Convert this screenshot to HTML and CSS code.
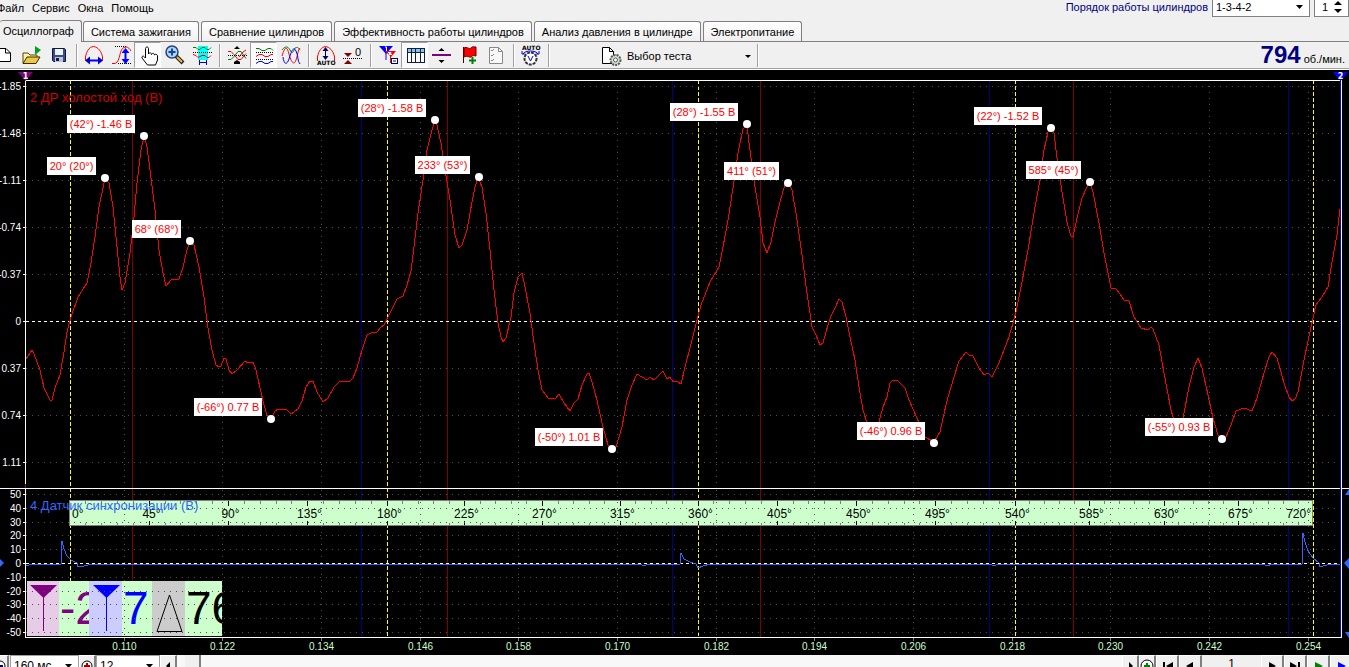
FILE: index.html
```html
<!DOCTYPE html>
<html lang="ru">
<head>
<meta charset="utf-8">
<title>Осциллограф</title>
<link rel="stylesheet" href="styles.css">
</head>
<body>
<header class="top">
  <div class="top-left">
    <nav class="menu">
      <button>Файл</button><button>Сервис</button><button>Окна</button><button>Помощь</button>
    </nav>
    <div class="tabs" role="tablist">
      <button class="tab active" role="tab" aria-selected="true">Осциллограф</button>
      <button class="tab" role="tab">Система зажигания</button>
      <button class="tab" role="tab">Сравнение цилиндров</button>
      <button class="tab" role="tab">Эффективность работы цилиндров</button>
      <button class="tab" role="tab">Анализ давления в цилиндре</button>
      <button class="tab" role="tab">Электропитание</button>
    </div>
  </div>
  <div class="order">
    <label for="order">Порядок работы цилиндров</label>
    <span class="combo order-combo"><select id="order"><option>1-3-4-2</option></select><svg class="caret" viewBox="0 0 7 4"><path d="M0 0h7L3.500 4z"/></svg></span>
    <span class="combo num-combo"><input id="cyl" aria-label="Цилиндр" value="1"><svg class="updown" viewBox="0 0 8 14"><path d="M0 5L4 1l4 4zM0 9h8l-4 4z"/></svg></span>
  </div>
</header>

<div class="toolbar">
  <button class="tool" aria-label="Новый"><svg viewBox="0 0 27 26"><path d="M4 6.500h11l4.500 4.500v8.500H4z" fill="#fff" stroke="#000"/><path d="M14.500 6.500V11h5" fill="none" stroke="#000"/></svg></button>
  <button class="tool" aria-label="Открыть"><svg viewBox="0 0 27 26"><path d="M5 21V11h5l2 2h7v3" fill="#fff3a8" stroke="#554400"/><path d="M5 21.500L9 15h13l-4 6.500z" fill="#f0c840" stroke="#332b00"/><path d="M17 4v9l6-5z" fill="#00a020"/></svg></button>
  <button class="tool" aria-label="Сохранить"><svg viewBox="0 0 27 26"><path d="M7.500 6.500h12l1 1v12h-12l-1-1z" fill="#3c4a8c" stroke="#10183c"/><rect x="10" y="7" width="8" height="6" fill="#e8f4ff"/><rect x="10" y="15" width="8" height="5" fill="#b8c4d8"/><rect x="11" y="16" width="3" height="3" fill="#10183c"/></svg></button>
  <i class="sep"></i>
  <button class="tool" aria-label="По горизонтали"><svg viewBox="0 0 27 26" fill="none"><path d="M5.500 18.500V15c1-5 3-10 8-10.500 5 .5 8 5.500 9 10.500v3.500" stroke="#f00"/><path d="M7 18.500h14" stroke="#00f" stroke-width="2"/><path d="M5 18.500l5-4v8zM23 18.500l-5-4v8z" fill="#00c"/></svg></button>
  <button class="tool" aria-label="По вертикали"><svg viewBox="0 0 27 26" fill="none"><path d="M5 21.500h3c3-1 4-5 5-9 1-5 3-7.500 6-7.500 2 0 4 2 5 4" stroke="#f00"/><path d="M8 4.500h12M11 21.500h13" stroke="#000" stroke-dasharray="1 1"/><path d="M18.500 9v11" stroke="#00f" stroke-width="2"/><path d="M18.500 6l4 5h-8zM18.500 22l4-5h-8z" fill="#00f"/></svg></button>
  <button class="tool pressed" aria-label="Рука" aria-pressed="true"><svg viewBox="0 0 27 26"><path d="M11.500 16V6.500c0-2 3-2 3 0V12c0-1.500 3-1.500 3 .5 0-1.500 3-1.500 3 .5 0-1 3-1 3 1v4l-2 5h-8l-5.500-7c-.5-2 1.500-2.500 2.500-1z" fill="#fff" stroke="#000"/></svg></button>
  <button class="tool" aria-label="Лупа"><svg viewBox="0 0 27 26"><path d="M15 14l7 7" stroke="#222" stroke-width="4"/><path d="M16 15l5 5" stroke="#e8b848" stroke-width="2"/><circle cx="11" cy="10" r="6" fill="#a8d8ff" stroke="#30406c" stroke-width="1.500"/><path d="M11 6.500v7M7.500 10h7" stroke="#1840a0" stroke-width="2"/></svg></button>
  <button class="tool" aria-label="Участок"><svg viewBox="0 0 27 26" fill="none"><path d="M10 4h10v14H10z" fill="#0ff"/><path d="M5 5.500h3l2 2h2l2-2h3l2 2h2l2-2" stroke="#008000"/><path d="M5 10.500h19" stroke="#000" stroke-dasharray="1 1"/><path d="M5 12.500l3 1 2 2 2-1 2-1h3l2 2h2l2-2" stroke="#f00"/><path d="M11.500 18v5M18.500 18v5M12 20.500h6" stroke="#00c"/></svg></button>
  <i class="sep"></i>
  <button class="tool" aria-label="Свести"><svg viewBox="0 0 27 26" fill="none"><path d="M5 9.500h3l3 3 4 5h3l5-6" stroke="#f00"/><path d="M5 17.500h3l3-3 4-5h3l5 7" stroke="#008000"/><path d="M16 15l4-5 3-2" stroke="#f00"/><path d="M5 13.500h19" stroke="#000" stroke-dasharray="1 1"/><path d="M11 7l3-3 3 3zM11 20l3-2 3 2v2h-6z" fill="#000"/></svg></button>
  <button class="tool pressed" aria-label="Развести" aria-pressed="true"><svg viewBox="0 0 27 26" fill="none"><path d="M6 6.500h3l3 2h3l3-2h3l2 2" stroke="#008000"/><path d="M6 14.500l3-2h3l3 2h3l3-2h2" stroke="#f00"/><path d="M6 21.500l3-2h3l3 2h3l3-2h2" stroke="#00f"/><path d="M6 10.500h18M6 17.500h18" stroke="#000" stroke-dasharray="1 1"/></svg></button>
  <button class="tool" aria-label="Наложить"><svg viewBox="0 0 27 26" fill="none"><path d="M5 8c3-4 6-4 8 0s3 3 5-2c2-1 3-1 5 2" stroke="#008000"/><path d="M5 14C8 4 10 4 12 12s5 12 7 6 2-10 4-12" stroke="#f00"/><path d="M6 15c1 8 4 8 6 2s4-14 7-8 1 10 4 13" stroke="#00f"/></svg></button>
  <i class="sep"></i>
  <button class="tool" aria-label="Авто"><svg viewBox="0 0 27 26" fill="none"><path d="M5.500 19v-4c1-6 4-10 8-10.500 4 .5 8 4.500 9 10.500v4" stroke="#f00"/><path d="M13.500 7v9" stroke="#006"/><path d="M13.500 5l3 4h-6zM13.500 18l3-4h-6z" fill="#006"/><text class="auto" x="5" y="23">AUTO</text></svg></button>
  <button class="tool" aria-label="Ноль"><svg viewBox="0 0 27 26"><path d="M5 11h8l-4 4zM5 22h8l-4-4z" fill="#800000"/><path d="M4 16.500h20" stroke="#000" stroke-dasharray="1 1"/><text class="zero" x="16" y="14">0</text></svg></button>
  <i class="sep"></i>
  <button class="tool" aria-label="Маркеры"><svg viewBox="0 0 27 26"><path d="M5 4h14l-7 8z" fill="#00f"/><path d="M12 8v10" stroke="#00f"/><path d="M11 5h1.500v4" fill="none" stroke="#fff"/><path d="M11 9h11l-5 6z" fill="#f00"/><path d="M16.500 12v9" stroke="#f00"/><path d="M14 10.500h3v1h-2v1h3" fill="none" stroke="#fff"/><rect x="17.500" y="16.500" width="6" height="5" fill="#fff" stroke="#006"/><path d="M19 19h3" stroke="#006"/></svg></button>
  <button class="tool pressed" aria-label="Таблица" aria-pressed="true"><svg viewBox="0 0 27 26"><rect x="6.500" y="6.500" width="17" height="14" fill="#fff" stroke="#102040"/><rect x="7" y="7" width="16" height="3" fill="#8cc4f0"/><path d="M6 10.500h18M10.500 7v13M14.500 7v13M19.500 7v13" stroke="#102040"/></svg></button>
  <button class="tool" aria-label="Линия"><svg viewBox="0 0 27 26"><path d="M4 13h19" stroke="#800080" stroke-width="2"/><path d="M10.500 9l3-3 3 3zM10.500 18h6l-3 3z"/></svg></button>
  <button class="tool" aria-label="Флаг"><svg viewBox="0 0 27 26"><path d="M8.500 5v16" stroke="#400"/><path d="M9 6c3-2 5 2 7 0s3-1 5-1v9c-3-1-4 0-5 1s-4-2-7 0z" fill="#f00" stroke="#600"/><path d="M17.500 15v7M14 18.500h7" stroke="#008000" stroke-width="2"/></svg></button>
  <button class="tool" aria-label="Список"><svg viewBox="0 0 27 26" fill="none" stroke="#888"><path d="M7.500 5.500h9l4 4v12h-13z" fill="#f8f8f8"/><path d="M16.500 5.500v4h4M9 8l1 1 2-2M9 13l1 1 2-2M9 18l1 1 2-2"/></svg></button>
  <i class="sep"></i>
  <button class="tool" aria-label="Автопуск"><svg viewBox="0 0 27 26" fill="none"><text class="auto" x="5" y="8">AUTO</text><path d="M6 12c2-4 13-4 15 0M5 9v3h3M22 9v3h-3" stroke="#00f"/><circle cx="13.500" cy="16.500" r="6" fill="#fff" stroke="#333" stroke-width="2" stroke-dasharray="3 1"/><path d="M11 14l2.500 5 2.500-5" stroke="#00f"/></svg></button>
  <i class="sep"></i>
  <button class="test">
    <svg class="test-icon" viewBox="0 0 22 22"><path d="M1.500 2.500h7l4 4v12h-11z" fill="#fff" stroke="#000"/><path d="M8.500 2.500v4h4" fill="none" stroke="#000"/><circle cx="14.500" cy="15" r="5" fill="#d8ddd4" stroke="#555e55" stroke-width="2" stroke-dasharray="2 1"/><circle cx="14.500" cy="15" r="2" fill="#fff" stroke="#555e55"/></svg>
    <span>Выбор теста</span>
    <svg class="test-caret" viewBox="0 0 6 3"><path d="M0 0h6L3 3z"/></svg>
  </button>
  <i class="sep"></i>
  <div class="rpm"><b>794</b><span>об./мин.</span></div>
</div>

<main class="scope"><svg id="chart" viewBox="0 70 1349 585" preserveAspectRatio="xMinYMin meet"></svg></main>

<footer class="bottom">
  <button class="nav round-cut" aria-label="Уменьшить"><svg viewBox="0 0 14 14"><circle cx="7" cy="7" r="5" fill="#fff" stroke="#000"/><path d="M4 7h6" stroke="#006" stroke-width="2"/></svg></button>
  <span class="combo time-combo"><select aria-label="Развёртка"><option>160 мс</option></select><svg class="caret" viewBox="0 0 7 4"><path d="M0 0h7L3.500 4z"/></svg></span>
  <button class="nav" aria-label="Увеличить"><svg viewBox="0 0 14 14"><circle cx="7" cy="7" r="5" fill="#fff" stroke="#000"/><path d="M4 7h6M7 4v6" stroke="#900" stroke-width="2"/></svg></button>
  <span class="combo div-combo"><select aria-label="Деление"><option>12</option></select><svg class="caret" viewBox="0 0 7 4"><path d="M0 0h7L3.500 4z"/></svg></span>
  <button class="nav" aria-label="Влево"><svg viewBox="0 0 14 14"><path d="M9 3v8L5 7z"/></svg></button>
  <div class="track"><i class="thumb"></i></div>
  <button class="nav" aria-label="Вправо"><svg viewBox="0 0 14 14"><path d="M6 3v8l4-4z"/></svg></button>
  <button class="nav" aria-label="Добавить"><svg viewBox="0 0 14 14"><circle cx="7" cy="7" r="6" fill="#fff" stroke="#000"/><path d="M4 7h6M7 4v6" stroke="#008000" stroke-width="2"/></svg></button>
  <button class="nav wide" aria-label="В начало"><svg viewBox="0 0 14 14"><path d="M3 3h2v8H3zM13 3v8L6 7z"/></svg></button>
  <button class="nav wide" aria-label="Назад"><svg viewBox="0 0 14 14"><path d="M10 3v8L3 7z"/></svg></button>
  <output class="page">1</output>
  <button class="nav wide" aria-label="Вперёд"><svg viewBox="0 0 14 14"><path d="M4 3v8l7-4z"/></svg></button>
  <button class="nav wide" aria-label="В конец"><svg viewBox="0 0 14 14"><path d="M2 3v8l7-4zM10 3h2v8h-2z"/></svg></button>
  <button class="nav wide" aria-label="Пуск"><svg viewBox="0 0 14 14"><path d="M4 3v8l8-4z" fill="#008000"/></svg></button>
  <button class="nav wide last" aria-label="Воспроизвести"><svg viewBox="0 0 14 14"><path d="M4 3v8l8-4z" fill="#00f"/></svg></button>
</footer>
<script src="chart.js"></script>
</body>
</html>
```

FILE: styles.css
```css
* { box-sizing: border-box; }
body { margin: 0; height: 100vh; overflow: hidden; display: flex; flex-direction: column; background: #f0f0f0; color: #000; font: 11px/14px "Liberation Sans", Arial, sans-serif; }
button, select, input { font: inherit; color: inherit; border: 0; padding: 0; margin: 0; background: none; border-radius: 0; appearance: none; }

.top { display: flex; justify-content: space-between; align-items: flex-start; flex: none; border-bottom: 1px solid #808080; }
.menu { display: flex; gap: 8px; height: 19px; align-items: flex-start; margin-left: -3px; padding-top: 1px; }
.tabs { display: flex; gap: 2px; align-items: flex-end; height: 22px; }
.tab { height: 20px; padding: 0 7px; white-space: nowrap; background: linear-gradient(#fff, #f0f0f0); border: 1px solid #808080; border-bottom: 0; border-radius: 3px 3px 0 0; }
.tab.active { height: 22px; margin: 0 -1px -1px 0; padding: 0 7px 2px 3px; border-left: 0; background: #f0f0f0; position: relative; }
.order { display: flex; gap: 4px; align-items: center; margin-top: -4px; color: #000080; }
.combo { position: relative; display: block; background: #fff; color: #000; height: 21px; border: 1px solid #808080; }
.combo select, .combo input { width: 100%; height: 100%; padding: 0 3px; }
.order-combo { width: 98px; }
.num-combo { width: 35px; }
.num-combo input { padding-left: 7px; }
.caret { position: absolute; right: 6px; top: 8px; width: 7px; height: 4px; }
.updown { position: absolute; right: 6px; top: 3px; width: 8px; height: 14px; }

.toolbar { display: flex; align-items: stretch; flex: none; height: 28px; padding-bottom: 1px; border-bottom: 1px solid #fff; box-shadow: inset 0 -1px #a0a0a0; margin-left: -9px; }
.tool { width: 27px; height: 26px; flex: none; }
.tool svg { display: block; width: 27px; height: 26px; }
.tool.pressed { background: #fafafa; border: 1px solid #fff; border-top-color: #a0a0a0; border-left-color: #a0a0a0; }
.tool.pressed svg { margin: -1px; }
.sep { width: 8px; flex: none; margin: 2px 0 1px; background: linear-gradient(90deg, transparent 4px, #a0a0a0 4px, #a0a0a0 5px, #fff 5px, #fff 6px, transparent 6px); }
.auto { font: bold 6px "DejaVu Sans", sans-serif; fill: #000; }
.zero { font: 11px "Liberation Sans", Arial, sans-serif; fill: #000; }
.test { display: flex; align-items: center; gap: 4px; width: 201px; padding: 2px 2px 0 49px; }
.test-icon { width: 22px; height: 22px; }
.test-caret { width: 6px; height: 3px; margin-left: auto; }
.rpm { display: flex; align-items: baseline; gap: 3px; margin-left: auto; padding-right: 4px; }
.rpm b { font-size: 24px; line-height: 26px; color: #000080; }

.scope { flex: 1 1 0; min-height: 0; background: #000; overflow: hidden; }
.scope > svg { display: block; width: 100%; font-family: "Liberation Sans", Arial, sans-serif; }
.scope polyline { fill: none; shape-rendering: crispEdges; }
.scope text { fill: #fff; }
.axis { font-size: 10px; }
.scope .time { font-size: 10px; fill: #cfc; }
.scope .degree { font-size: 12px; fill: #000; }
.title { font-size: 13px; }
.scope .title-a { fill: #d00000; }
.scope .title-b { fill: #36f; }
.scope .flag { font-size: 11px; fill: #f00; }
.marker { font: bold 8px "DejaVu Sans", sans-serif; }
.big { font-size: 46px; }
.scope .purple { fill: #800080; }
.scope .blue { fill: #00f; }
.scope .black { fill: #000; }

.bottom { display: flex; flex: none; height: 12px; align-items: flex-start; background: #f0f0f0; }
.bottom .combo { height: 22px; border-color: #a0a0a0; font-size: 12px; line-height: 20px; }
.bottom .combo select { height: 16px; line-height: 16px; }
.time-combo { width: 69px; margin-left: 1px; }
.div-combo { width: 64px; }
.nav { width: 17px; height: 20px; flex: none; border: 1px solid #fff; border-right: 2px solid #808080; background: #f0f0f0; padding: 1px 0 0; }
.nav svg { display: block; width: 14px; height: 14px; margin: 0 auto; }
.nav.wide { width: 23px; }
.nav.last { margin-right: -4px; }
.round-cut { margin-left: -8px; }
.track { flex: 1; height: 20px; background: #f8f8f8; padding-left: 8px; }
.thumb { display: block; width: 16px; height: 20px; background: #f0f0f0; border-right: 2px solid #808080; }
.page { width: 59px; text-align: center; font-size: 12px; line-height: 18px; }
```

FILE: chart.js
```js
const NS = 'http://www.w3.org/2000/svg';
const chart = document.getElementById('chart');

function add(tag, attrs, text, parent = chart) {
  const el = document.createElementNS(NS, tag);
  for (const k in attrs) el.setAttribute(k, attrs[k]);
  if (text !== undefined) el.textContent = text;
  parent.appendChild(el);
  return el;
}
function line(x1, y1, x2, y2, stroke, dash) {
  const a = { x1, y1, x2, y2, stroke };
  if (dash) a['stroke-dasharray'] = dash;
  return add('line', a);
}
function box(x, y, width, height, fill) {
  return add('rect', { x, y, width, height, fill });
}

const strokes = [70.5, 387.5, 698.5, 1015.5, 1313.5];

// Cylinder markers
[132.5, 447.5, 760.5, 1073.5].forEach(x => line(x, 81, x, 637, '#800000'));
[361.5, 672.5, 989.5, 1288.5].forEach(x => line(x, 81, x, 637, '#000080'));
strokes.forEach(x => line(x, 80, x, 637, '#ff0', '4 2'));

// Angle scale
add('rect', { x: 69.5, y: 500.5, width: 1243, height: 25, fill: '#cfc', stroke: '#808080' });
for (let d = 9; d < 720; d += 9) {
  const s = Math.floor(d / 180);
  const x = Math.round(strokes[s] + (strokes[s + 1] - strokes[s]) * (d % 180) / 180) - 0.5;
  const major = d % 45 === 0;
  line(x, 501, x, major ? 506 : 504, major ? '#000' : '#808080');
  line(x, 525, x, major ? 521 : 523, major ? '#000' : '#808080');
  if (major) add('text', { class: 'degree', x: x + 2, y: 518, 'text-anchor': 'middle' }, d + '°');
}
add('text', { class: 'degree', x: 72, y: 518 }, '0°');
add('text', { class: 'degree', x: 1311, y: 518, 'text-anchor': 'end' }, '720°');

// Readout of the two rulers and their difference
box(27, 581, 195, 55, '#cfc');
box(27, 581, 32, 55, '#e6cce6');
box(89, 581, 33, 55, '#ccf');
box(152, 581, 33, 55, '#ccc');
add('path', { d: 'M30 585h27L43.500 598z', fill: '#800080' });
line(43.5, 590, 43.5, 631, '#800080');
add('path', { d: 'M93 585h27l-13.500 13z', fill: '#00f' });
line(106.5, 590, 106.5, 631, '#00f');
add('path', { d: 'M169.500 595l12.500 36.500h-25z', fill: 'none', stroke: '#000' });
[[59, 30, '-2', 'purple'], [122, 30, '7', 'blue'], [185, 37, '76', 'black']].forEach(([x, w, t, c]) => {
  const cell = add('svg', { x, y: 581, width: w, height: 55, overflow: 'hidden' });
  add('text', { class: 'big ' + c, x: 1, y: 43 }, t, cell);
});

// Grid
const valuesA = ['-1.85', '-1.48', '-1.11', '-0.74', '-0.37', '0', '0.37', '0.74', '1.11'];
valuesA.forEach((v, i) => {
  const y = 86.5 + i * 47;
  line(26, y, 1340, y, '#505050', '1 5');
  line(23, y, 26, y, '#fff');
  add('text', { class: 'axis', x: 21, y: y + 3, 'text-anchor': 'end' }, v);
});
for (let i = 0; i <= 10; i++) {
  const y = Math.round(494 + i * 13.8) + 0.5;
  line(26, y, 1340, y, '#505050', '1 5');
  line(23, y, 26, y, '#fff');
  add('text', { class: 'axis', x: 21, y: y + 3, 'text-anchor': 'end' }, 50 - i * 10);
}
for (let i = 0; i < 13; i++) {
  const x = Math.floor(124.3 + i * 98.66) + 0.5;
  line(x, 86, x, 484, '#505050', '1 5');
  line(x, 490, x, 637, '#505050', '1 5');
  line(x, 637, x, 641, '#808080');
  add('text', { class: 'time', x, y: 650, 'text-anchor': 'middle' }, (0.110 + i * 0.012).toFixed(3));
}

add('text', { class: 'title title-a', x: 30, y: 102 }, '2 ДР холостой ход (В)');
add('text', { class: 'title title-b', x: 30, y: 510 }, '4 Датчик синхронизации (В)');

// Signal traces
const traceA = '26,359 32,350 34,354 40,370 44,388 50,400 52,400 55,388 60,375 64,352 67,332 71,317 78,297 87,283 91,263 95,237 99,207 103,188 105,178 109,183 113,207 117,247 120,277 122,290 125,283 130,253 134,217 137,183 141,150 144,136 147,147 150,170 155,210 159,250 163,273 166,286 171,280 179,279 183,267 187,250 190,242 194,245 199,267 204,297 208,328 212,350 216,365 219,367 221,366 224,358 226,359 229,370 232,374 237,370 245,361 248,363 253,362 256,370 260,388 264,405 267,415 271,419 275,411 278,409 287,410 291,414 298,409 302,401 306,387 310,381 313,381 317,392 323,402 328,398 334,387 340,381 349,382 353,378 357,368 362,350 367,335 373,332 377,332 381,327 384,325 390,313 397,299 403,296 407,285 411,271 414,247 418,213 423,180 427,150 432,130 435,120 437,125 441,143 445,170 450,200 455,235 459,248 462,245 467,230 472,202 475,187 478,177 482,187 486,213 490,250 494,290 498,323 501,337 503,342 506,338 511,317 514,293 518,277 522,273 525,287 530,313 534,343 538,370 542,390 549,399 556,398 559,394 564,403 570,411 574,403 578,399 582,385 587,374 589,373 592,382 597,400 603,427 608,445 612,449 616,447 622,427 627,400 632,385 637,374 642,377 647,380 650,377 654,380 659,375 663,371 667,379 670,377 673,382 677,381 681,384 685,367 690,348 697,320 701,305 710,282 719,267 723,247 728,220 733,188 738,153 743,129 747,124 749,143 755,187 760,217 763,243 767,253 771,242 775,222 781,198 785,185 788,183 792,190 796,213 802,255 807,293 812,327 816,335 820,345 823,343 828,325 831,316 835,308 839,299 842,302 846,317 850,337 855,360 859,387 863,410 867,423 873,428 879,422 883,407 887,397 890,383 893,380 897,380 901,384 905,388 909,400 917,418 925,437 934,442 940,432 943,418 948,397 954,377 959,361 966,352 969,355 973,356 979,368 984,375 988,373 992,377 994,373 999,363 1009,337 1016,312 1022,282 1028,250 1034,213 1040,180 1044,150 1048,132 1051,128 1054,133 1057,158 1062,192 1067,222 1071,236 1073,237 1077,218 1082,198 1087,187 1090,182 1093,192 1099,223 1104,253 1111,288 1116,289 1120,294 1124,300 1129,301 1134,317 1141,328 1148,330 1151,327 1153,329 1159,345 1164,373 1171,410 1176,427 1181,427 1184,413 1189,387 1194,367 1198,358 1202,368 1208,395 1213,418 1218,435 1222,439 1226,437 1231,425 1236,411 1244,408 1252,411 1257,398 1264,373 1269,357 1272,352 1277,358 1284,383 1289,397 1292,401 1295,399 1298,392 1304,360 1311,327 1316,305 1322,297 1328,287 1332,262 1337,235 1340,209';
const traceB = '26,566 32,564 61,564 62,541 64,549 67,556 71,560 77,563 78,567 84,566 92,564 641,564 643,566 650,564 680,564 681,553 684,559 690,562 696,564 698,568 703,566 710,564 991,564 993,566 999,564 1264,564 1266,566 1273,564 1302,564 1303,533 1305,542 1308,551 1313,558 1319,563 1320,567 1327,565 1340,564';
line(26, 321.5, 1340, 321.5, '#fff', '3 3');
line(26, 563.5, 1340, 563.5, '#fff', '3 3');
add('polyline', { points: traceA, stroke: '#f00' });
add('polyline', { points: traceB, stroke: '#36f' });

// Frame
line(25, 80.5, 1342, 80.5, '#fff');
line(25.5, 80, 25.5, 484, '#fff');
line(25.5, 484, 25.5, 488, '#800080');
line(0, 488.5, 1349, 488.5, '#fff');
line(25.5, 489, 25.5, 637, '#fff');
line(25, 637.5, 1342, 637.5, '#fff');
line(1340.5, 80, 1340.5, 637, '#00f');
line(1341.5, 80, 1341.5, 637, '#fff');

// Peak flags: box left, box top, box width, text, point x, point y
[
  [67, 115, 68, '(42°) -1.46 В', 144, 136], [47, 157, 49, '20° (20°)', 105, 178],
  [132, 220, 49, '68° (68°)', 190, 241], [194, 398, 68, '(-66°) 0.77 В', 271, 419],
  [358, 99, 68, '(28°) -1.58 В', 435, 120], [415, 156, 55, '233° (53°)', 479, 177],
  [535, 428, 68, '(-50°) 1.01 В', 612, 449], [670, 103, 68, '(28°) -1.55 В', 747, 124],
  [724, 162, 55, '411° (51°)', 788, 183], [857, 422, 68, '(-46°) 0.96 В', 934, 443],
  [974, 107, 68, '(22°) -1.52 В', 1051, 128], [1026, 161, 55, '585° (45°)', 1090, 182],
  [1145, 418, 68, '(-55°) 0.93 В', 1222, 439]
].forEach(([x, y, w, t, cx, cy]) => {
  box(x, y, w, 18, '#fff');
  add('text', { class: 'flag', x: x + w / 2, y: y + 13, 'text-anchor': 'middle' }, t);
  add('circle', { cx, cy, r: 4, fill: '#fff' });
});

// Ruler handles and zero-level handles
add('path', { d: 'M18 72h15l-7.500 9z', fill: '#800080' });
add('text', { class: 'marker', x: 25.5, y: 79, 'text-anchor': 'middle' }, '1');
add('path', { d: 'M1333 72h15l-7.500 9z', fill: '#00f' });
add('text', { class: 'marker', x: 1340.5, y: 79, 'text-anchor': 'middle' }, '2');
add('path', { d: 'M0 559l4 4-4 4zM1349 558l-5 5 5 6zM1349 489l-4 6h4zM1345 632h4v6z', fill: '#36f' });
```
